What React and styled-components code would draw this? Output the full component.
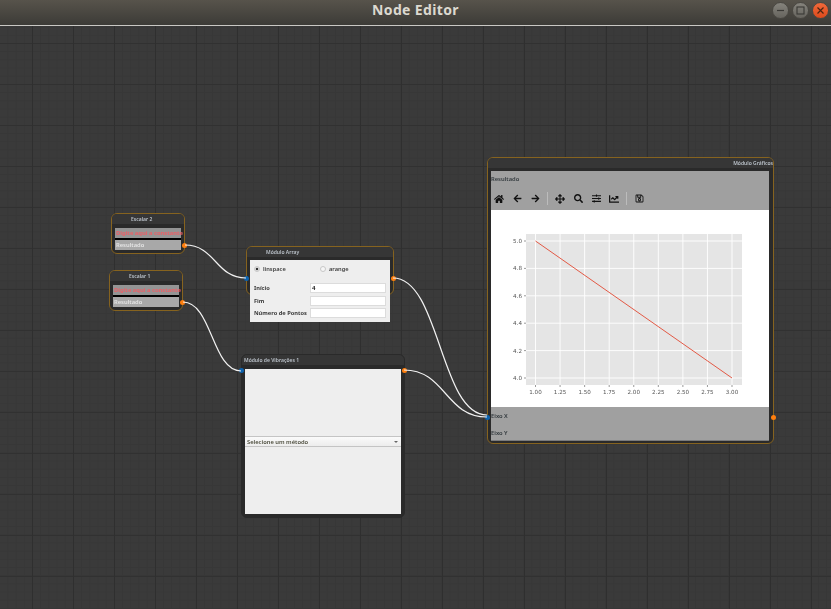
import React from 'react';
import styled, { createGlobalStyle } from 'styled-components';
import {
  FaHome,
  FaArrowLeft,
  FaArrowRight,
  FaArrowsAlt,
  FaSearch,
  FaSlidersH,
  FaChartLine,
  FaRegSave,
} from 'react-icons/fa';

const GlobalStyle = createGlobalStyle`
  html, body {
    margin: 0;
    padding: 0;
    background: #3a3a3a;
    font-family: "Noto Sans", "Open Sans", sans-serif;
  }
  * { box-sizing: border-box; }
`;

const Window = styled.div`
  width: 831px;
  height: 609px;
  display: flex;
  flex-direction: column;
  overflow: hidden;
`;

const TitleBar = styled.header`
  height: 26px;
  flex: none;
  display: flex;
  align-items: center;
  justify-content: flex-end;
  gap: 3px;
  padding: 0 2px 4px 0;
  position: relative;
  background: linear-gradient(#57534b, #3c3b37);
  border-bottom: 1px solid #c9c8c4;
`;

const Title = styled.h1`
  position: absolute;
  left: 0;
  right: 0;
  top: 0;
  margin: 0;
  text-align: center;
  font-size: 14px;
  line-height: 19px;
  font-weight: 700;
  letter-spacing: 0.35px;
  color: #dcd9d0;
`;

const WinButton = styled.button`
  width: 17px;
  height: 17px;
  padding: 0;
  border: 1px solid #4a4843;
  border-radius: 50%;
  display: flex;
  align-items: center;
  justify-content: center;
  background: ${(p) =>
    p.$close
      ? 'linear-gradient(#f0693a, #dd4a1c)'
      : 'linear-gradient(#85837c, #66645e)'};
  svg { display: block; }
`;

const Canvas = styled.main`
  flex: 1;
  position: relative;
  background-color: #3a3a3a;
  background-image:
    linear-gradient(to right, #2f2f2f 1px, transparent 1px),
    linear-gradient(to bottom, #313131 1px, transparent 1px),
    linear-gradient(to right, #373737 1px, transparent 1px),
    linear-gradient(to bottom, #373737 1px, transparent 1px);
  background-size: 41px 41px, 41px 41px, 8.2px 8.2px, 8.2px 8.2px;
  background-position: 32px 17px, 32px 17px, 32px 17px, 32px 17px;
`;

const Wires = styled.svg`
  position: absolute;
  left: 0;
  top: 0;
  z-index: 2;
  pointer-events: none;
`;

const Node = styled.section`
  position: absolute;
  left: ${(p) => p.$x}px;
  top: ${(p) => p.$y - 26}px;
  width: ${(p) => p.$w}px;
  height: ${(p) => p.$h}px;
  display: flex;
  flex-direction: column;
  border: 1px solid ${(p) => p.$border || '#86631f'};
  border-radius: 6px;
  background: #2a2a2a;
  filter: blur(0.3px);
`;

const NodeTitle = styled.div`
  flex: none;
  height: 13px;
  display: flex;
  align-items: center;
  justify-content: ${(p) => p.$justify || 'flex-start'};
  padding: ${(p) => p.$pad || '0'};
  padding-bottom: 3px;
  border-radius: 5px 5px 0 0;
  background: linear-gradient(#363636 0 75%, #2a2a2a 75%);
  font-size: 5px;
  font-weight: 600;
  white-space: nowrap;
  color: #bcc3cb;
`;

const Port = styled.span`
  position: absolute;
  z-index: 3;
  width: 5px;
  height: 5px;
  border-radius: 50%;
  top: ${(p) => p.$top}px;
  ${(p) => (p.$out ? 'right: -3px;' : 'left: -3.5px;')}
  background: ${(p) => (p.$out ? '#ff7f0e' : '#0d62ad')};
`;

const ScalarBody = styled.div`
  margin: 1px 3px 0;
  display: flex;
  flex-direction: column;
  gap: 2px;
  background: #000;
`;

const ScalarField = styled.div`
  height: 10px;
  padding-left: 1px;
  display: flex;
  align-items: center;
  background: ${(p) => (p.$red ? '#949494' : '#a8a8a8')};
  color: ${(p) => (p.$red ? '#ea6168' : '#e6e6e6')};
  font-size: 5.8px;
  font-weight: ${(p) => (p.$red ? 700 : 600)};
  white-space: nowrap;
`;

const ArrayPanel = styled.div`
  flex: none;
  margin: 0 3px;
  height: 62px;
  padding: 4px;
  background: #eeeeee;
  font-size: 5.7px;
  font-weight: 600;
  color: #3a3a3a;
`;

const RadioRow = styled.div`
  display: flex;
  height: 9px;
  margin-bottom: 9px;
`;

const RadioOption = styled.label`
  width: 67px;
  display: flex;
  align-items: center;
  gap: 3px;
`;

const RadioDot = styled.span`
  width: 6px;
  height: 6px;
  border-radius: 50%;
  border: 1px solid #c8c8c8;
  background: ${(p) =>
    p.$on ? 'radial-gradient(circle, #333 0 1.4px, #e4e4e4 1.6px)' : '#f6f6f6'};
`;

const FormRow = styled.div`
  height: 12.5px;
  display: flex;
  align-items: center;
  justify-content: space-between;
  font-weight: 700;
`;

const FormInput = styled.div`
  width: 76px;
  height: 10px;
  padding-left: 1px;
  display: flex;
  align-items: center;
  background: #fff;
  border: 1px solid #dcdcdc;
  font-size: 6px;
  color: #222;
`;

const VibPanel = styled.div`
  flex: 1;
  margin: 1px 3px 3px;
  display: flex;
  flex-direction: column;
  padding-top: 67px;
  background: #eeeeee;
`;

const Combo = styled.div`
  height: 11px;
  padding: 0 3px 0 2px;
  display: flex;
  align-items: center;
  justify-content: space-between;
  background: linear-gradient(#fafafa, #ededed);
  border-top: 1px solid #c4c4c4;
  border-bottom: 1px solid #c4c4c4;
  font-size: 5.8px;
  font-weight: 600;
  color: #4a4a3a;
`;

const ComboArrow = styled.span`
  width: 0;
  height: 0;
  border-left: 2px solid transparent;
  border-right: 2px solid transparent;
  border-top: 2px solid #666;
`;

const GraphPanel = styled.div`
  flex: 1;
  margin: 0 4px 3px 3px;
  display: flex;
  flex-direction: column;
  background: #a0a0a0;
  border-bottom: 1px solid #7b7b7b;
`;

const GraphLabel = styled.div`
  height: ${(p) => p.$h}px;
  display: flex;
  align-items: center;
  font-size: 5.8px;
  font-weight: 600;
  color: #333a3e;
`;

const Toolbar = styled.div`
  height: 23px;
  margin-left: -1px;
  display: flex;
  align-items: center;
  color: #111;
`;

const ToolButton = styled.span`
  width: 18px;
  display: flex;
  justify-content: center;
  svg { display: block; }
`;

const ToolSep = styled.span`
  width: 1px;
  height: 13px;
  margin: 0 3px;
  background: #bcbcbc;
`;

const Plot = styled.svg`
  display: block;
  flex: none;
  background: #fff;
`;

const xTicks = [1, 1.25, 1.5, 1.75, 2, 2.25, 2.5, 2.75, 3];
const yTicks = [5, 4.8, 4.6, 4.4, 4.2, 4];
const xAt = (v) => 535.5 + (v - 1) * 98.25;
const yAt = (v) => 378 - (v - 4) * 137;

function wire(x1, y1, x2, y2) {
  const c = (x2 - x1) / 2;
  return `M${x1} ${y1} C${x1 + c} ${y1} ${x2 - c} ${y2} ${x2} ${y2}`;
}

function Chart() {
  return (
    <Plot width="278" height="197" viewBox="491 210 278 197">
      <rect x="526" y="234" width="216" height="151" fill="#e5e5e5" />
      {xTicks.map((t) => (
        <g key={t}>
          <line x1={xAt(t)} x2={xAt(t)} y1="234" y2="385" stroke="#fff" strokeWidth="0.9" />
          <line x1={xAt(t)} x2={xAt(t)} y1="385" y2="387" stroke="#555" strokeWidth="0.6" />
          <text x={xAt(t)} y="393.5" fontSize="5.6" fill="#555" textAnchor="middle" fontFamily="DejaVu Sans">
            {t.toFixed(2)}
          </text>
        </g>
      ))}
      {yTicks.map((t) => (
        <g key={t}>
          <line x1="526" x2="742" y1={yAt(t)} y2={yAt(t)} stroke="#fff" strokeWidth="0.9" />
          <line x1="524" x2="526" y1={yAt(t)} y2={yAt(t)} stroke="#555" strokeWidth="0.6" />
          <text x="522" y={yAt(t) + 2} fontSize="5.6" fill="#555" textAnchor="end" fontFamily="DejaVu Sans">
            {t.toFixed(1)}
          </text>
        </g>
      ))}
      <line x1={xAt(1)} y1={yAt(5)} x2={xAt(3)} y2={yAt(4)} stroke="#e24a33" strokeWidth="0.9" />
    </Plot>
  );
}

function Scalar({ name, x, y }) {
  return (
    <Node $x={x} $y={y} $w={74} $h={41}>
      <NodeTitle $pad="0 0 0 19px">{name}</NodeTitle>
      <ScalarBody>
        <ScalarField $red>Digite aqui a constante</ScalarField>
        <ScalarField>Resultado</ScalarField>
      </ScalarBody>
      <Port $out $top={28.5} />
    </Node>
  );
}

export default function App() {
  return (
    <Window>
      <GlobalStyle />
      <TitleBar>
        <Title>Node Editor</Title>
        <WinButton>
          <svg width="9" height="9" viewBox="0 0 9 9">
            <line x1="1" y1="4.5" x2="8" y2="4.5" stroke="#3a3935" strokeWidth="1.2" />
          </svg>
        </WinButton>
        <WinButton>
          <svg width="9" height="9" viewBox="0 0 9 9">
            <rect x="1" y="1" width="7" height="7" fill="none" stroke="#3a3935" strokeWidth="1.1" />
          </svg>
        </WinButton>
        <WinButton $close>
          <svg width="9" height="9" viewBox="0 0 9 9">
            <path d="M1.5 1.5 L7.5 7.5 M7.5 1.5 L1.5 7.5" stroke="#4a2412" strokeWidth="1.2" />
          </svg>
        </WinButton>
      </TitleBar>

      <Canvas>
        <Scalar name="Escalar 2" x={111} y={213} />
        <Scalar name="Escalar 1" x={109} y={270} />

        <Node $x={246} $y={246} $w={148} $h={49}>
          <NodeTitle $pad="0 0 0 19px">Módulo Array</NodeTitle>
          <ArrayPanel>
            <RadioRow>
              <RadioOption>
                <RadioDot $on />
                linspace
              </RadioOption>
              <RadioOption>
                <RadioDot />
                arange
              </RadioOption>
            </RadioRow>
            <FormRow>
              Início
              <FormInput>4</FormInput>
            </FormRow>
            <FormRow>
              Fim
              <FormInput />
            </FormRow>
            <FormRow>
              Número de Pontos
              <FormInput />
            </FormRow>
          </ArrayPanel>
          <Port $top={28.5} />
          <Port $out $top={28.5} />
        </Node>

        <Node $x={241} $y={354} $w={164} $h={164} $border="#2a2a2a">
          <NodeTitle $pad="0 0 0 2px">Módulo de Vibrações 1</NodeTitle>
          <VibPanel>
            <Combo>
              Selecione um método
              <ComboArrow />
            </Combo>
          </VibPanel>
          <Port $top={13} />
          <Port $out $top={13} />
        </Node>

        <Node $x={487} $y={157} $w={287} $h={287}>
          <NodeTitle $justify="flex-end">Módulo Gráficos</NodeTitle>
          <GraphPanel>
            <GraphLabel $h={16}>Resultado</GraphLabel>
            <Toolbar>
              <ToolButton><FaHome size={10} /></ToolButton>
              <ToolButton><FaArrowLeft size={9} /></ToolButton>
              <ToolButton><FaArrowRight size={9} /></ToolButton>
              <ToolSep />
              <ToolButton><FaArrowsAlt size={10} /></ToolButton>
              <ToolButton><FaSearch size={9} /></ToolButton>
              <ToolButton><FaSlidersH size={9} /></ToolButton>
              <ToolButton><FaChartLine size={10} /></ToolButton>
              <ToolSep />
              <ToolButton><FaRegSave size={9} /></ToolButton>
            </Toolbar>
            <Chart />
            <GraphLabel $h={18}>Eixo X</GraphLabel>
            <GraphLabel $h={15}>Eixo Y</GraphLabel>
          </GraphPanel>
          <Port $top={256.5} />
          <Port $out $top={256.5} />
        </Node>

        <Wires width="831" height="583" viewBox="0 26 831 583">
          <g fill="none" stroke="#f2f2f2" strokeWidth="1.2">
            <path d={wire(185, 245, 246, 278)} />
            <path d={wire(183, 302, 241, 371)} />
            <path d={wire(393, 278, 487, 415)} />
            <path d={wire(404, 370, 487, 417)} />
          </g>
        </Wires>
      </Canvas>
    </Window>
  );
}
